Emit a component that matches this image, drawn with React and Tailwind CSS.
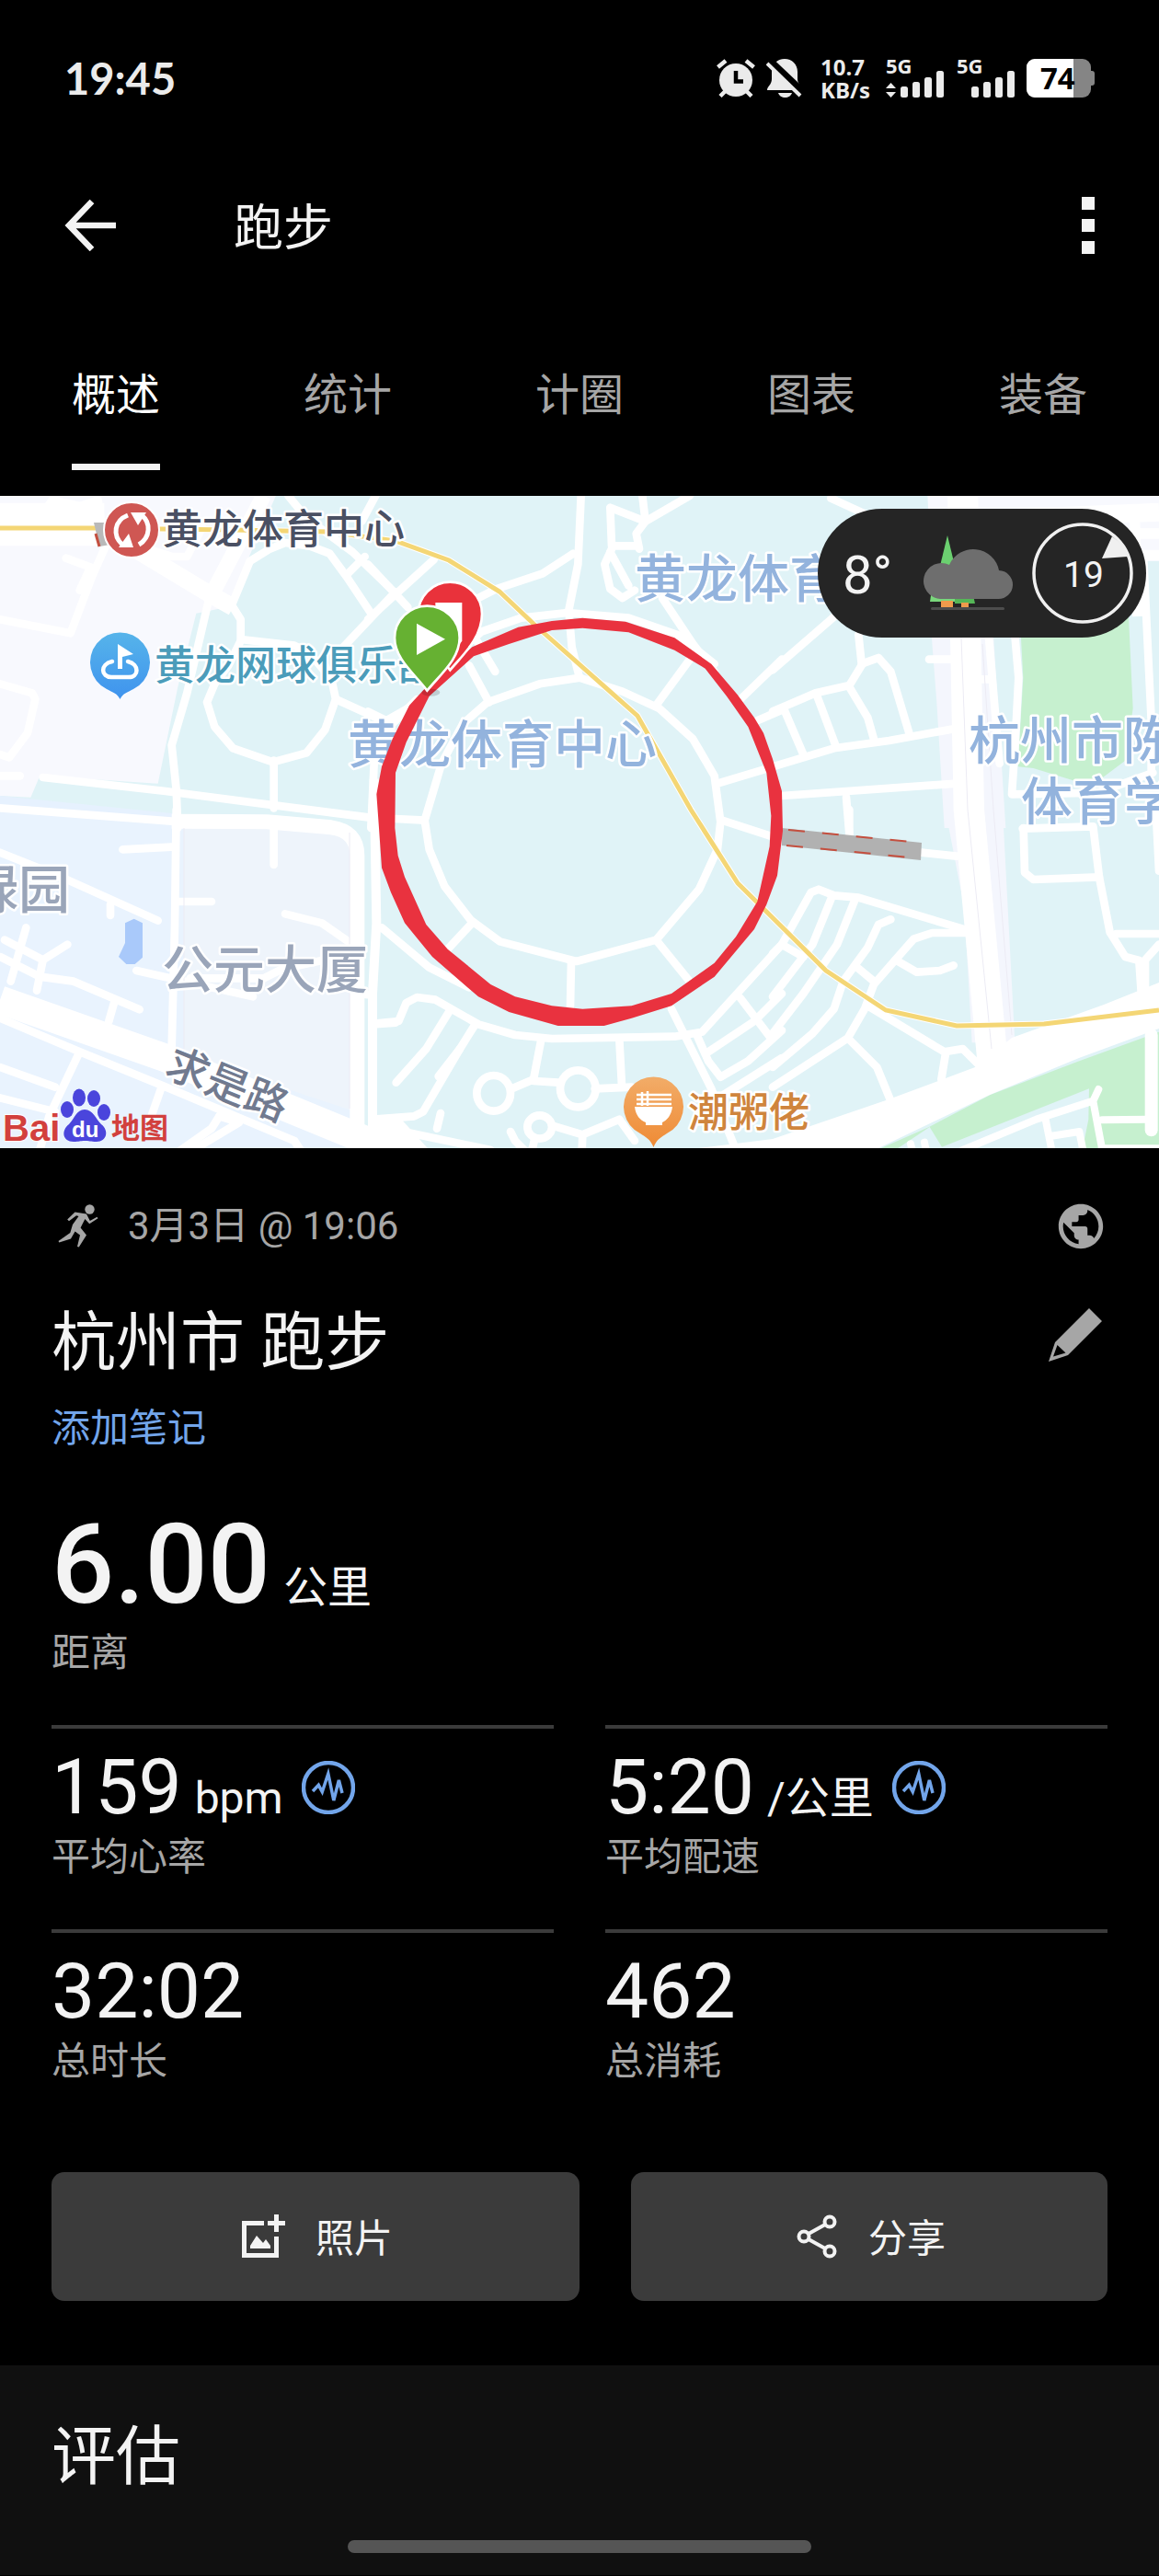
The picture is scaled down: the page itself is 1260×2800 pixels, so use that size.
import React, { useState } from 'react';
import { MdPublic } from 'react-icons/md';

const TABS = ['概述', '统计', '计圈', '图表', '装备'];

const STATS = [
  { id: 'hr',   value: '159',   unit: 'bpm',   label: '平均心率', trend: true },
  { id: 'pace', value: '5:20',  unit: '/公里', label: '平均配速', trend: true },
  { id: 'time', value: '32:02', label: '总时长' },
  { id: 'kcal', value: '462',   label: '总消耗' },
];

// ── Status bar ──────────────────────────────────────────────────────────────
const Signal = ({ data }) => (
  <svg className="w-16 h-[42px] overflow-visible" viewBox="0 0 64 42" fill="#ebebeb">
    <text x="0" y="16" fontSize="22" fontWeight="700" fontFamily="'Open Sans', sans-serif">5G</text>
    {data && <path d="M0 32 L5.5 26 L11 32 Z M0 36 L5.5 42 L11 36 Z" />}
    <rect x="16" y="30" width="8" height="12" rx="2.5" />
    <rect x="29" y="25" width="8" height="17" rx="2.5" />
    <rect x="42" y="20" width="8" height="22" rx="2.5" />
    <rect x="55" y="13" width="8" height="29" rx="2.5" />
  </svg>
);

const StatusBar = () => (
  <div className="h-[170px] px-[70px] flex items-center justify-between">
    <span className="font-['Lato'] font-bold text-[47px] leading-[60px] text-[#ebebeb]">19:45</span>
    <div className="flex items-center">
      <svg className="w-[42px] h-[42px]" viewBox="0 0 42 42">
        <g stroke="#ebebeb" strokeWidth="4.5">
          <path d="M1.5 9 L10 2 M40.5 9 L32 2 M4 40.5 L10 34.5 M38 40.5 L32 34.5" />
        </g>
        <circle cx="21" cy="23" r="18" fill="#ebebeb" />
        <path d="M21 13 V24.5 H29" fill="none" stroke="#000" strokeWidth="4.5" />
      </svg>
      <svg className="w-10 h-[42px] ml-3" viewBox="0 0 40 42" fill="#ebebeb">
        <path d="M20 0 C28 0 34 6 34 14 V22 C34 27 39 30 39 34 H1 C1 30 6 28 6 22 V14 C6 6 12 0 20 0 Z" />
        <path d="M13 37 H28 C27 40 24 42 20.5 42 C17 42 14 40 13 37 Z" />
        <path d="M2 1 L40 37" stroke="#000" strokeWidth="9" />
        <path d="M1 5 L37 40" stroke="#ebebeb" strokeWidth="4" />
      </svg>
      <div className="ml-[19px] w-[51px] font-['Open_Sans'] font-bold text-[24px] leading-[25px] text-[#ebebeb]">
        <div>10.7</div>
        <div>KB/s</div>
      </div>
      <span className="ml-5"><Signal data /></span>
      <span className="ml-[13px]"><Signal /></span>
      <svg className="w-[74px] h-[42px] ml-3 overflow-visible" viewBox="0 0 74 42">
        <rect x="64" y="13" width="10" height="16" rx="3" fill="#858585" />
        <rect width="70" height="42" rx="9" fill="#858585" />
        <path d="M9 0 H51 V42 H9 A9 9 0 0 1 0 33 V9 A9 9 0 0 1 9 0 Z" fill="#fff" />
        <text x="15" y="33" fontSize="33" fontWeight="700" fontFamily="'Open Sans', sans-serif">74</text>
      </svg>
    </div>
  </div>
);

// ── Map ─────────────────────────────────────────────────────────────────────
// Six tiles, drawn at 3x and placed by their top left corner.
const TILES = [
  {
    at: 'translate(0 530) scale(0.33333)',
    thin: [
      'M0 430 L230 475 L300 290 L345 190', 'M215 230 L310 265 L290 270 L260 335',
      'M0 640 L105 670 L115 690 L90 800 L30 880 L0 870', 'M0 940 L65 940',
      'M110 130 L170 40 L260 60 L320 40 L330 110', 'M170 60 L200 100',
      'M450 190 L560 225 L610 225 L660 130',
      'M760 390 L785 430 L785 495 L960 515 L1010 540 L1060 600',
      'M755 385 L815 240 L880 200 L930 180 L1010 190 L1075 215 L1130 290 L1210 410',
      'M940 26 L1000 100 L1150 210 L1290 345', 'M1225 26 L1180 110',
      'M1130 285 L1190 225', 'M1290 340 L1120 520',
      'M785 500 L745 580 L700 640 L675 700 L700 780 L760 850 L890 895 L1000 865 L1060 790 L1095 690 L1080 620 L1050 560',
      'M1095 690 L1260 765', 'M893 890 L893 1045', 'M140 945 L540 990 L1200 1075',
      'M680 370 L610 670 L560 840 L575 985 L580 1110', 'M1260 760 L1330 720',
    ],
  },
  {
    at: 'translate(400 530) scale(0.33333)',
    thin: [
      'M695 26 L685 250 L655 400 L665 520 L690 620',
      'M185 1085 L240 900 L310 770 L390 700 L560 640 L690 620 L830 665 L950 720 L1060 820 L1130 940 L1150 1090 L1140 1180 L1080 1310 L940 1475 L680 1545 L430 1480 L335 1410 L250 1300 L200 1180 Z',
      'M330 580 L395 700', 'M320 440 L415 600', 'M1050 560 L940 710', 'M1140 965 L1290 920',
      'M670 215 L570 280 L420 330 L340 370', 'M0 250 L130 390', 'M215 235 L0 430',
      'M895 26 L905 110 L1050 26', 'M905 110 L790 65 L795 190 L880 190', 'M905 110 L875 150 L885 200',
      'M795 200 L772 250 L790 330 L830 360 L870 335', 'M790 210 L850 320', 'M960 360 L1060 510 L1130 600',
      'M1350 560 L1215 690', 'M1270 760 L1350 725', 'M0 730 L80 770 L160 690',
      'M300 530 L370 470 L500 425 L650 408 L850 425 L1010 480 L1130 575', 'M20 900 L10 1110',
    ],
  },
  {
    at: 'translate(840 530) scale(0.33333)',
    thin: [
      'M190 35 L300 85', 'M225 400 L0 595', 'M280 480 L290 575 L345 555 L385 600 L445 800',
      'M290 580 L250 645 L140 670 L0 730', 'M250 650 L310 750 L330 820', 'M145 680 L205 840', 'M40 730 L100 870',
      'M0 910 L200 850 L380 825 L600 785', 'M30 1005 L600 965', 'M240 1010 L250 1130', 'M510 560 L600 560',
      'M705 490 L740 900', 'M660 625 L710 625', 'M790 480 L802 620 L790 850 L780 1000 L1060 995 L1240 930',
      'M1210 240 L1235 760 L1235 920',
    ],
  },
  {
    at: 'translate(0 880) scale(0.33333)',
    thin: [
      'M0 140 L200 220 L515 362', 'M360 310 L360 345', 'M85 385 L35 560', 'M15 425 L140 490 L220 440',
      'M140 490 L120 590', 'M0 480 L130 545 L240 560 L455 652', 'M375 620 L355 690', 'M400 130 L560 122',
      'M575 300 L690 300', 'M893 40 L893 180', 'M930 340 L1050 370 L1150 440', 'M445 525 L825 610',
      'M620 550 L860 550 L920 520 L1060 490', 'M575 0 L570 380 L560 780', 'M0 680 L260 790 L530 900 L960 1080',
      'M255 800 L160 1000 L130 1110', 'M0 840 L180 905', 'M0 940 L180 985', 'M525 910 L490 1010',
      'M715 1000 L690 1040 L590 1110', 'M715 1000 L780 1020 L630 1110', 'M960 1080 L980 1110',
      'M1160 600 L1215 605', 'M1215 700 L1290 695', 'M0 -5 L560 38',
    ],
  },
  {
    at: 'translate(400 880) scale(0.33333)',
    thin: [
      'M940 425 L1045 555', 'M663 495 L660 640', 'M335 375 L260 455', 'M185 35 L90 30', 'M1155 35 L1310 85',
      'M45 385 L200 515 L330 580',
      'M20 698 L100 690 L125 630 L160 612 L220 620 L360 700 L480 735 L600 747 L1000 740 L1090 725 L1350 440',
      'M270 650 L190 780 L92 890', 'M350 700 L300 780 L230 870', 'M300 780 L180 985 L150 1000 L20 1010',
      'M565 750 L540 880 L470 910', 'M540 885 L620 890', 'M740 910 L860 905', 'M820 750 L828 900',
      'M600 1030 L700 1060 L820 1010 L870 1080', 'M700 1060 L698 1110', 'M20 1030 L400 1110', 'M237 990 L225 1040',
      'M465 1050 L480 1080 L510 1110', 'M545 1070 L535 1110', 'M990 650 L1120 910 L1200 1110',
      'M1075 740 L1110 820 L1150 872 L1240 820 L1350 720', 'M1110 790 L1260 690 L1350 600', 'M1215 615 L1310 740',
      'M1160 930 L1350 810',
      'M465 925 A55 58 0 1 0 355 925 A55 58 0 1 0 465 925', 'M743 910 A58 60 0 1 0 627 910 A58 60 0 1 0 743 910',
      'M600 1035 A40 38 0 1 0 520 1035 A40 38 0 1 0 600 1035',
    ],
  },
  {
    at: 'translate(840 880) scale(0.33333)',
    thin: [
      'M250 0 L250 90', 'M485 140 L600 152', 'M30 440 L125 270 L150 260 L200 280 L280 287 L640 395',
      'M195 280 L130 440 L0 610', 'M270 290 L210 440 L100 600 L0 730', 'M385 358 L345 375 L310 450 L230 560 L200 650 L130 730 L0 840',
      'M640 402 L520 402 L460 422 L400 490 L330 570 L300 650 L245 745 L0 905', 'M400 490 L470 530 L545 525 L590 508',
      'M270 510 L330 560', 'M30 440 L100 480', 'M310 640 L560 790 L620 780 L680 840', 'M565 790 L550 880',
      'M250 750 L340 840 L385 950', 'M815 62 L1045 55 L1065 220 L1100 400 L1150 480 L1195 492 L1205 640',
      'M818 60 L822 205 L850 228 L1065 220', 'M1120 405 L1260 405', 'M1260 440 L1215 490 L1215 600',
      'M1250 0 L1260 200', 'M0 470 L30 440',
    ],
  },
];

const TRACK_OUTER = 'M700 425 L600 435 L490 455 L340 520 L200 640 L135 710 L80 820 L45 910 L28 1000 L36 1110 L45 1240 L75 1320 L120 1420 L210 1530 L360 1660 L460 1710 L620 1755 L770 1755 L860 1730 L990 1690 L1130 1595 L1260 1440 L1300 1360 L1335 1265 L1353 1120 L1350 990 L1320 885 L1290 800 L1260 750 L1205 675 L1120 575 L1000 490 L840 437 Z';
const TRACK_INNER = 'M700 458 L600 465 L460 510 L345 550 L200 680 L125 830 L90 930 L88 1110 L98 1200 L120 1270 L190 1425 L260 1505 L400 1620 L480 1660 L600 1690 L700 1700 L860 1690 L990 1650 L1130 1550 L1200 1465 L1270 1350 L1310 1170 L1315 1070 L1300 930 L1240 780 L1170 680 L1100 590 L1000 530 L850 472 Z';
const METRO = 'M0 574 L100 574 L253 576 L357 578 L430 588 L488 609 L543 643 L580 678 L693 778 L751 880 L802 960 L898 1055 L963 1098 L1040 1115 L1135 1113 L1260 1098';

const MapLabel = ({ size = 56, className, children, ...pos }) => (
  <text
    fontSize={size}
    fontWeight="500"
    stroke="#fff"
    strokeWidth="5"
    strokeLinejoin="round"
    paintOrder="stroke"
    fontFamily="'Noto Sans CJK SC', sans-serif"
    className={className}
    {...pos}
  >
    {children}
  </text>
);

const RouteMap = () => (
  <svg className="block w-full" viewBox="0 539 1260 709" role="img" aria-label="跑步路线">
    <defs>
      <linearGradient id="bluePin" x1="0" y1="0" x2="0" y2="1">
        <stop offset="0" stopColor="#56b4ea" /><stop offset="1" stopColor="#3f93ee" />
      </linearGradient>
      <linearGradient id="orangePin" x1="0" y1="0" x2="0" y2="1">
        <stop offset="0" stopColor="#f2ac68" /><stop offset="1" stopColor="#ef8b35" />
      </linearGradient>
    </defs>
    <rect y="539" width="1260" height="709" fill="#e0f3f7" />

    {/* city blocks and parks */}
    <g transform="translate(0 530) scale(0.33333)">
      <path d="M0 26 H900 L740 390 L640 410 L580 650 L515 965 L130 940 L100 1010 L0 1005 Z" fill="#f8f9fe" />
      <path d="M0 1005 L590 1065 V1120 H0 Z" fill="#e6f1fe" />
    </g>
    <g transform="translate(0 880) scale(0.33333)">
      <path d="M0 10 L900 50 L1170 80 V1110 H0 Z" fill="#e9f3fe" />
      <path d="M600 60 L1120 60 L1145 120 V980 L600 800 Z" fill="#eef4fb" />
      <path d="M408 370 L437 356 L465 370 V482 L440 504 H412 L387 480 L408 435 Z" fill="#a9c9fa" />
      <path d="M1200 1010 L1300 1000 L1400 1110 H1200 Z" fill="#fff" />
    </g>
    <g transform="translate(840 530) scale(0.33333)">
      <path d="M505 26 H1260 V240 H1180 L530 490 Z" fill="#f8f9fe" />
      <path d="M518 480 H720 L760 1110 H560 L535 700 Z" fill="#f4f6fd" />
      <path d="M805 400 H1160 L1175 720 L1150 890 L1070 950 L980 955 L850 915 L800 910 L817 620 Z" fill="#c6f0cf" />
    </g>
    <g transform="translate(840 880) scale(0.33333)">
      <path d="M563 0 H750 L790 760 H650 L625 320 Z" fill="#f4f6fd" />
      <path d="M340 1110 L510 1035 L710 930 L1000 820 L1260 725 V1110 Z" fill="#c6f0cf" />
      <path d="M400 1110 L512 1035 L552 1100 L1032 910 L1030 1010 L1010 1110 Z" fill="#e0f3f7" />
    </g>

    {/* main roads */}
    <g fill="none" stroke="#fff" strokeLinejoin="round">
      <g transform="translate(0 530) scale(0.33333)">
        <path d="M0 120 L340 140 L680 345 L760 390" strokeWidth="56" />
        <path d="M0 80 H340 M0 160 L340 160" strokeWidth="60" />
        <path d="M860 26 L690 350" strokeWidth="50" />
      </g>
      <g transform="translate(0 880) scale(0.33333)">
        <path d="M0 620 L540 810 L1320 1130" strokeWidth="92" />
        <path d="M560 38 L870 40 L1080 58 Q1165 70 1165 150 L1165 1040" strokeWidth="48" />
        <path d="M1220 -100 L1228 370 L1215 600 L1215 1040" strokeWidth="30" />
      </g>
      <g transform="translate(840 530) scale(0.33333)">
        <path d="M620 26 L640 1050 L720 1900" strokeWidth="100" />
        <path d="M640 105 L1260 80" strokeWidth="60" />
        <path d="M1160 150 L1260 150 M1190 220 H1260 M1180 60 L1190 420" strokeWidth="34" />
      </g>
      <g transform="translate(840 880) scale(0.33333)">
        <path d="M1235 735 L1235 1045" strokeWidth="42" strokeLinecap="round" />
      </g>
    </g>
    <path d="M840 1238 L966 1195 L1060 1160 L1100 1128 L1200 1092 L1260 1068 V1118 L1173 1150 L1076 1190 L955 1248 H760 Z" fill="#fff" />

    {/* side streets */}
    {TILES.map(tile => (
      <g
        key={tile.at}
        transform={tile.at}
        fill="none"
        stroke="#fff"
        strokeWidth="26"
        strokeLinecap="round"
        strokeLinejoin="round"
      >
        {tile.thin.map(d => <path key={d} d={d} />)}
      </g>
    ))}
    <g transform="translate(840 880) scale(0.33333)" fill="none" stroke="#fff" strokeWidth="24" strokeLinecap="round" strokeLinejoin="round">
      <path d="M620 1110 L860 1010 L1045 950 L1063 912 M1045 950 L1075 1110 M1075 1012 L1220 1010 M890 1010 L910 1110 M905 1065 L1000 1050 L1012 1110 M1085 1105 H1260" />
      <path d="M450 1090 L455 1110 M495 1085 L500 1110" />
    </g>
    <g fill="none" stroke="#ecebf4" strokeWidth="1">
      <path d="M1040 560 L1052 880 L1078 1140 M1068 700 L1080 880 L1100 1125" />
      <path d="M200 900 V1140 M380 905 V1205" />
    </g>

    {/* metro line */}
    <path d={METRO} fill="none" stroke="#fff" strokeWidth="7" />
    <path d={METRO} fill="none" stroke="#f4d675" strokeWidth="5" />

    {/* footbridges */}
    <path d="M850 900 L1002 916 L1001 935 L850 919 Z" fill="#b1b1b1" />
    <path d="M857 902 L1000 916 M855 919 L1000 933" stroke="#c44f3f" strokeWidth="2" strokeDasharray="18 19" />
    <path d="M102 568 H120 V592 L108 594 Z" fill="#b9b9b9" />
    <path d="M104 580 L108 594" stroke="#c44f3f" strokeWidth="3" />

    <MapLabel x="176" y="591" size={44} className="fill-[#4a5063]">黄龙体育中心</MapLabel>
    <MapLabel x="168" y="739" size={44} className="fill-[#4b9cba]">黄龙网球俱乐部</MapLabel>
    <MapLabel x="690" y="649" className="fill-[#93b3dd]">黄龙体育</MapLabel>
    <MapLabel x="378" y="829" className="fill-[#93b3dd]">黄龙体育中心</MapLabel>
    <MapLabel x="1053" y="825" className="fill-[#93b3dd]">杭州市陈</MapLabel>
    <MapLabel x="1110" y="891" className="fill-[#93b3dd]">体育学</MapLabel>
    <MapLabel x="-36" y="987" className="fill-[#9aa5b9]">绿园</MapLabel>
    <MapLabel x="176" y="1074" className="fill-[#9aa5b9]">公元大厦</MapLabel>
    <MapLabel x="-23" y="17" size={46} transform="translate(205 1161) rotate(22)" className="fill-[#717a8f]">求是路</MapLabel>
    <MapLabel x="748" y="1225" size={44} className="fill-[#cf853d]">潮粥佬</MapLabel>

    {/* recorded track */}
    <path transform="translate(400 530) scale(0.33333)" fillRule="evenodd" fill="#e9323f" d={`${TRACK_OUTER} ${TRACK_INNER}`} />

    {/* finish and start pins */}
    <g transform="translate(400 530) scale(0.33333)">
      <path d="M268 595 C230 545 164 480 164 412 A104 104 0 0 1 372 412 C372 490 310 545 268 595 Z" fill="#e9323b" stroke="#fff" strokeWidth="8" />
      <path d="M220 375 H307 V500 L260 560 L220 460 Z" fill="#fff" />
      <ellipse cx="205" cy="668" rx="30" ry="12" fill="#000" opacity="0.15" />
      <path d="M193 662 C155 610 87 560 87 490 A106 104 0 0 1 299 490 C299 560 235 610 193 662 Z" fill="#66b132" stroke="#fff" strokeWidth="8" />
      <path d="M159 443 L252 494 L159 546 Z" fill="#fff" />
    </g>

    {/* bus terminal */}
    <circle cx="143" cy="576" r="30" fill="#cf5753" stroke="#fff" strokeWidth="2" />
    <g fill="none" stroke="#fff" strokeWidth="5">
      <path d="M139 560 C124 566 122 582 133 592" />
      <path d="M151 592 C164 584 164 568 154 560" />
    </g>
    <path d="M129 595 H145 L140 580 Z M142 557 H159 L150 571 Z" fill="#fff" />

    {/* tennis club */}
    <path d="M130.5 760 C127 753 123 753 116 749 A32.5 32.5 0 1 1 145 749 C138 753 134 753 130.5 760 Z" fill="url(#bluePin)" />
    <path d="M122 719 C108 722 110 736 121 736 H140 C151 736 152 722 139 719" fill="none" stroke="#fff" strokeWidth="4.5" strokeLinecap="round" />
    <path d="M128 727 V700 L145 711 L133 714 V727 Z" fill="#fff" />

    {/* restaurant */}
    <path d="M710.5 1247 C707 1238 702 1236 696 1232 A32.5 32.5 0 1 1 725 1232 C719 1236 714 1238 710.5 1247 Z" fill="url(#orangePin)" />
    <path d="M690 1203 H731 C730 1212 725 1218 720 1220 V1223 H702 V1220 C696 1218 691 1212 690 1203 Z" fill="#fff" />
    <path d="M692 1190 H730 M692 1195 H730 M692 1200 H730 M698 1187 V1202 M704 1186 V1202" stroke="#fff" strokeWidth="2.5" />

    {/* map provider mark */}
    <g fontFamily="'Liberation Sans', sans-serif" fontWeight="700">
      <text x="3" y="1240" fontSize="40" fill="#d2403d" stroke="#fff" strokeWidth="2" paintOrder="stroke">Bai</text>
      <g fill="#4a45dc">
        <ellipse cx="73" cy="1206" rx="7" ry="9" />
        <ellipse cx="86" cy="1193" rx="7" ry="9.5" />
        <ellipse cx="102" cy="1194" rx="7" ry="9" />
        <ellipse cx="113" cy="1209" rx="7" ry="9" />
        <path d="M92 1206 C101 1206 104 1216 110 1222 C119 1229 116 1241 105 1241 C98 1241 97 1240 92 1240 C87 1240 86 1241 80 1241 C68 1241 66 1229 75 1222 C81 1216 83 1206 92 1206 Z" />
      </g>
      <text x="78" y="1236" fontSize="24" fill="#fff">du</text>
    </g>
    <text x="121" y="1237" fontSize="31" fontWeight="700" fill="#d2403d" fontFamily="'Noto Sans CJK SC', sans-serif">地图</text>
  </svg>
);

const WeatherPill = () => (
  <div className="absolute top-[14px] right-[14px] w-[357px] h-[140px] rounded-full bg-[#252525] flex items-center text-[#f3f3f3]">
    <span className="ml-[27px] pt-1 w-[54px] text-[58px] leading-[60px]">8°</span>
    <svg className="w-[100px] h-[84px] ml-8" viewBox="0 0 100 84">
      <path d="M28 1 L36 34 H20 Z" fill="#6bd070" />
      <path d="M10 66 H46 V73 H9 Z" fill="#7ad77c" />
      <path d="M36 66 H56 L58 75 H36 Z" fill="#55b657" />
      <rect x="21" y="72" width="13" height="8" fill="#ef9b4c" />
      <rect x="43" y="74" width="8" height="6" fill="#ef9b4c" />
      <rect x="10" y="79" width="80" height="3" rx="1.5" fill="#4d4d4d" />
      <path d="M20 70 A19.5 19.5 0 1 1 30 33 A28.5 28.5 0 0 1 84 39 A15.5 15.5 0 1 1 83 70 Z" fill="#6e6e6e" />
    </svg>
    <svg className="w-[110px] h-[110px] ml-5" viewBox="0 0 110 110">
      <circle cx="55" cy="55" r="53" fill="none" stroke="#f0f0f0" strokeWidth="3.5" />
      <path d="M76 39 L87 15 Q100 24 104 37 Z" fill="#f0f0f0" />
      <text x="56" y="70" fontSize="39" textAnchor="middle" fill="#f3f3f3" fontFamily="Roboto, sans-serif">19</text>
    </svg>
  </div>
);

// ── Icons ───────────────────────────────────────────────────────────────────
const RunnerIcon = () => (
  <svg className="w-11 h-12" viewBox="0 0 44 48" fill="#a6a6a6">
    <circle cx="34.5" cy="5.5" r="5.2" />
    <path d="M18.5 8.4 L10.2 16.6 L12 18.2 L20 12.2 L22.5 13 L16 22 L13.3 31 L.5 40 L1.3 41.6 L14 37.4 L18.6 29.5 L24 33.4 L21 46 L22.8 46.6 L31 33.4 L24.6 25.6 L29.4 16 L34.2 21.3 L43.5 15.2 L42.5 13.8 L34.8 18 L31 10.6 Z" />
  </svg>
);

const TrendIcon = () => (
  <svg className="w-[58px] h-[58px]" viewBox="0 0 58 58" fill="none" stroke="#72a5ea">
    <circle cx="29" cy="29" r="27" strokeWidth="4.5" />
    <path d="M12 33 L18.3 26.3 L22.3 33.7 L28.8 14 L34.8 43 L40.4 21 L44 35" strokeWidth="3.5" />
  </svg>
);

const PencilIcon = () => (
  <svg className="w-[58px] h-[58px]" viewBox="0 0 58 58" fill="#a6a6a6">
    <path fillRule="evenodd" d="M44 0 L58 14 L21 51 L0 58 L7 37 Z M9.5 40 L5 52.5 L18.5 48.5 Z" />
  </svg>
);

const PhotoIcon = () => (
  <svg className="w-12 h-12" viewBox="0 0 48 48" fill="#f3f3f3">
    <path d="M0 7 H24 V12 H5 V42 H35 V24 H40 V47 H0 Z" />
    <path d="M9 37 V34 L16 23 L23 31 L26 27 L31 34 V37 Z" />
    <path d="M35 0 H40 V7 H47 V12 H40 V19 H35 V12 H28 V7 H35 Z" />
  </svg>
);

const ShareIcon = () => (
  <svg className="w-[46px] h-12" viewBox="0 0 46 48" fill="none" stroke="#f3f3f3" strokeWidth="4">
    <circle cx="8" cy="24" r="5.5" />
    <circle cx="36" cy="8" r="5.5" />
    <circle cx="36" cy="40" r="5.5" />
    <path d="M13 21 L31 11 M13 27 L31 37" />
  </svg>
);

// ── Stats ───────────────────────────────────────────────────────────────────
const StatCell = ({ value, unit, label, trend }) => (
  <div className="border-t-4 border-[#3b3b3b] pt-[14px] pb-[52px]">
    <div className="flex items-center gap-5">
      <div className="flex items-baseline gap-[14px]">
        <span className="text-[84px] leading-[100px]">{value}</span>
        {unit && <span className="text-[48px] leading-[60px]">{unit}</span>}
      </div>
      {trend && <TrendIcon />}
    </div>
    <div className="text-[42px] leading-[52px] text-[#a6a6a6]">{label}</div>
  </div>
);

export default function App() {
  const [tab, setTab] = useState(TABS[0]);

  return (
    <div className="min-h-screen bg-black text-[#f3f3f3] font-['Roboto','Noto_Sans_CJK_SC',sans-serif] overflow-hidden">
      <StatusBar />

      <header className="h-[150px] px-[70px] flex items-center">
        <button aria-label="返回">
          <svg className="w-[58px] h-[56px]" viewBox="0 0 58 56" fill="none" stroke="#f3f3f3" strokeWidth="6.5">
            <path d="M56 28 H6 M30 2 L5 28 L30 54" />
          </svg>
        </button>
        <h1 className="ml-[126px] pt-2 text-[54px] leading-[60px]">跑步</h1>
        <button aria-label="更多" className="ml-auto flex flex-col gap-[10px]">
          <span className="size-[14px] bg-[#f3f3f3]" />
          <span className="size-[14px] bg-[#f3f3f3]" />
          <span className="size-[14px] bg-[#f3f3f3]" />
        </button>
      </header>

      <nav className="grid grid-cols-5 pt-20 pb-[28px]">
        {TABS.map(t => (
          <button key={t} onClick={() => setTab(t)} className="flex justify-center text-[48px] leading-[60px]">
            <span
              className={
                t === tab
                  ? 'pb-11 border-b-[7px] border-[#f3f3f3] text-white'
                  : 'pb-11 border-b-[7px] border-transparent text-[#a6a6a6]'
              }
            >
              {t}
            </span>
          </button>
        ))}
      </nav>

      <div className="relative">
        <RouteMap />
        <WeatherPill />
      </div>

      <main className="px-14 pb-[70px]">
        <div className="pt-[50px] h-[120px] flex items-center text-[#a6a6a6]">
          <span className="ml-[7px]"><RunnerIcon /></span>
          <span className="ml-8 text-[42px] leading-[60px]">3月3日 @ 19:06</span>
          <MdPublic size={58} className="ml-auto" />
        </div>

        <div className="mt-[42px] flex items-center justify-between">
          <h2 className="text-[70px] leading-[100px]">杭州市 跑步</h2>
          <button aria-label="编辑" className="mr-[6px] mb-[18px]"><PencilIcon /></button>
        </div>
        <a href="#note" className="block mt-[13px] text-[42px] leading-[60px] text-[#72a5ea]">添加笔记</a>

        <div className="mt-[58px] flex items-baseline gap-[14px]">
          <span className="text-[120px] leading-[120px] font-medium">6.00</span>
          <span className="text-[48px] leading-[60px]">公里</span>
        </div>
        <div className="mt-[6px] text-[42px] leading-[60px] text-[#a6a6a6]">距离</div>

        <div className="mt-12 grid grid-cols-2 gap-x-14">
          {STATS.map(({ id, ...stat }) => <StatCell key={id} {...stat} />)}
        </div>

        <div className="mt-[42px] grid grid-cols-[574fr_518fr] gap-14 text-[42px] leading-[60px]">
          <button className="h-[140px] pl-1 rounded-[14px] bg-[#3b3b3b] flex items-center justify-center gap-8">
            <PhotoIcon />
            <span className="pt-[6px]">照片</span>
          </button>
          <button className="h-[140px] pl-1 rounded-[14px] bg-[#3b3b3b] flex items-center justify-center gap-8">
            <ShareIcon />
            <span className="pt-[6px]">分享</span>
          </button>
        </div>
      </main>

      <section className="bg-[#101010] pt-[50px] pb-6">
        <h2 className="px-14 text-[70px] leading-[100px]">评估</h2>
        <div className="mt-10 mx-auto w-2/5 h-[14px] rounded-full bg-[#555555]" />
      </section>
    </div>
  );
}
